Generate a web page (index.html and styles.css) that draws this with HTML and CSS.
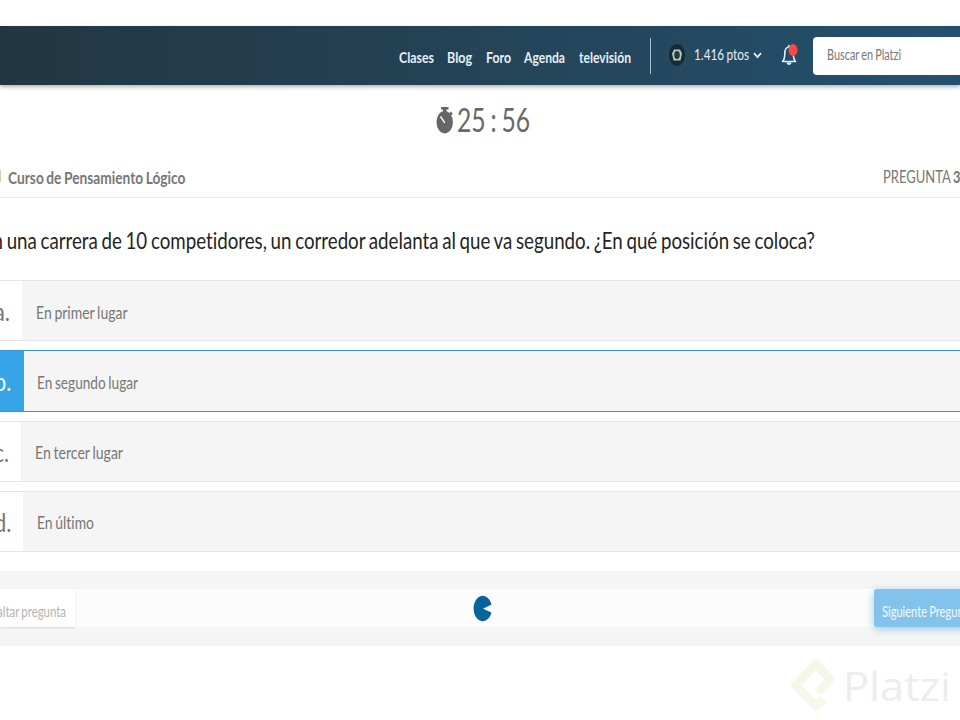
FILE: index.html
```html
<!DOCTYPE html>
<html lang="es">
<head>
<meta charset="utf-8">
<title>Curso de Pensamiento Lógico</title>
<link rel="stylesheet" href="styles.css">
</head>
<body>
<header class="navbar">
  <nav class="menu">
    <svg class="label" width="35" height="20"><text y="15" textLength="35" lengthAdjust="spacingAndGlyphs">Clases</text></svg>
    <svg class="label" width="25" height="20"><text y="15" textLength="25" lengthAdjust="spacingAndGlyphs">Blog</text></svg>
    <svg class="label" width="25" height="20"><text y="15" textLength="25" lengthAdjust="spacingAndGlyphs">Foro</text></svg>
    <svg class="label" width="41" height="20"><text y="15" textLength="41" lengthAdjust="spacingAndGlyphs">Agenda</text></svg>
    <svg class="label" width="52" height="20"><text y="15" textLength="52" lengthAdjust="spacingAndGlyphs">televisión</text></svg>
  </nav>
  <div class="profile">
    <svg class="avatar" width="16" height="22" viewBox="0 0 16 22"><ellipse cx="8" cy="11" rx="8" ry="11" fill="#162a35"/><path d="M5 5.500h6l2 4-1.500 7H4.500L3 9.500z" fill="#b9c8b8"/><ellipse cx="8" cy="11" rx="2.800" ry="4" fill="#203c43"/></svg>
    <svg class="label points" width="56" height="20"><text y="15" textLength="55" lengthAdjust="spacingAndGlyphs">1.416 ptos</text></svg>
    <svg class="chevron" width="9" height="7" viewBox="0 0 9 7"><path d="M1 1.200l3.500 4L8 1.200" fill="none" stroke="#e4eff5" stroke-width="1.800"/></svg>
  </div>
  <svg class="bell" width="17" height="24" viewBox="0 0 17 24"><path d="M1.500 18.500c2-2 2.300-4 2.300-8C3.800 6.500 5.500 4 8 4s4.300 2.500 4.300 6.500c0 4 .3 6 2.300 8zM8 4V2" fill="none" stroke="#e4f0f7" stroke-width="1.600" stroke-linejoin="round"/><path d="M5.500 19.500h5c-.3 3.300-4.700 3.300-5 0z" fill="#e4f0f7"/><ellipse cx="12" cy="7" rx="4.500" ry="6" fill="#fb4848"/></svg>
  <div class="search"><svg class="label" width="75" height="20"><text y="15" textLength="74" lengthAdjust="spacingAndGlyphs">Buscar en Platzi</text></svg></div>
</header>

<section class="timer">
  <svg width="18" height="28" viewBox="0 0 18 28"><path d="M5 1h7.500v2.500H10.500V6H7V3.500H5zM14.500 5.500l2.300 2-1.300 2-2-2z" fill="#666"/><ellipse cx="8.700" cy="16.200" rx="8.200" ry="11.200" fill="#666"/><path d="M4.500 10.500l4.300 6.300" stroke="#fff" stroke-width="1.400"/></svg>
  <svg class="label clock" width="74" height="38"><text y="26" textLength="73" lengthAdjust="spacingAndGlyphs">25 : 56</text></svg>
</section>

<section class="course">
  <span class="badge"></span>
  <svg class="label title" width="179" height="24"><text y="16.500" textLength="177.500" lengthAdjust="spacingAndGlyphs">Curso de Pensamiento Lógico</text></svg>
  <svg class="label count" width="77" height="24"><text y="15.500" textLength="77.500" lengthAdjust="spacingAndGlyphs">PREGUNTA <tspan class="strong">3</tspan></text></svg>
</section>

<h1 class="question"><svg class="label" width="833" height="32"><text y="22" textLength="833" lengthAdjust="spacingAndGlyphs">En una carrera de 10 competidores, un corredor adelanta al que va segundo. ¿En qué posición se coloca?</text></svg></h1>

<main class="options">
  <div class="option">
    <div class="key first"><svg class="label" width="16" height="30"><text y="20.500" textLength="16" lengthAdjust="spacingAndGlyphs">a.</text></svg></div>
    <svg class="label answer" width="92" height="24"><text y="18.500" textLength="91.500" lengthAdjust="spacingAndGlyphs">En primer lugar</text></svg>
  </div>
  <div class="option selected">
    <div class="key"><svg class="label" width="18" height="30"><text y="20.500" textLength="17.500" lengthAdjust="spacingAndGlyphs">b.</text></svg></div>
    <svg class="label answer" width="102" height="24"><text y="19" textLength="101" lengthAdjust="spacingAndGlyphs">En segundo lugar</text></svg>
  </div>
  <div class="option">
    <div class="key third"><svg class="label" width="15" height="30"><text y="20.500" textLength="15" lengthAdjust="spacingAndGlyphs">c.</text></svg></div>
    <svg class="label answer" width="89" height="24"><text y="19" textLength="88" lengthAdjust="spacingAndGlyphs">En tercer lugar</text></svg>
  </div>
  <div class="option">
    <div class="key fourth"><svg class="label" width="18" height="30"><text y="20.500" textLength="17.500" lengthAdjust="spacingAndGlyphs">d.</text></svg></div>
    <svg class="label answer" width="59" height="24"><text y="19" textLength="57" lengthAdjust="spacingAndGlyphs">En último</text></svg>
  </div>
</main>

<footer class="actions">
  <div class="bar">
    <div class="skip"><svg class="label" width="76" height="24"><text y="17.500" textLength="75" lengthAdjust="spacingAndGlyphs">Saltar pregunta</text></svg></div>
    <svg class="loader" width="20" height="27" viewBox="0 0 20 27"><path d="M18.500 9.500A9.200 12.700 0 1 0 18.500 17.500L10 13.700z" fill="#07659b"/></svg>
    <div class="next"><svg class="label" width="92" height="24"><text y="17.500" textLength="91" lengthAdjust="spacingAndGlyphs">Siguiente Pregunta</text></svg></div>
  </div>
</footer>

<div class="brand">
  <svg width="48" height="56" viewBox="0 0 48 56"><path d="M34 42.500L27 49L6.500 28.500L27 7L41 22L29 35.500" fill="none" stroke="#f4f8e8" stroke-width="8.500" stroke-linejoin="round"/></svg>
  <svg class="label" width="110" height="50"><text y="37" textLength="108" lengthAdjust="spacingAndGlyphs">Platzi</text></svg>
</div>
</body>
</html>
```
FILE: styles.css
```css
* { box-sizing: border-box; }
body { margin: 0; padding-top: 26px; height: 720px; overflow: hidden; background: #fff; font-family: Lato, "Liberation Sans", sans-serif; font-variant-ligatures: none; }
svg { display: block; flex: none; }
.label { overflow: visible; fill: #777; word-spacing: -0.06em; }

.navbar { display: flex; height: 59px; background: linear-gradient(90deg, #223642 0, #244052 350px, #25475d 620px, #22516f 960px); box-shadow: 0 2px 4px rgba(0,0,0,.3); }
.menu { display: flex; flex: none; gap: 13.5px; width: 651px; padding: 21.500px 0 0 398.500px; height: 59px; font-size: 15.5px; font-weight: 700; position: relative; }
.menu .label { fill: #e5eff5; }
.menu::after { content: ""; position: absolute; right: 0; top: 12px; width: 1px; height: 36px; background: #a9bdca; }
.profile { display: flex; flex: none; width: 130px; padding: 18px 0 0 18px; }
.navbar .points { margin: 1px 0 0 9px; fill: #e5eff5; font-size: 15px; }
.chevron { margin: 8px 0 0 2.500px; }
.bell { margin-top: 17px; }
.search { flex: none; margin: 11px 0 0 15px; padding: 8px 14px; width: 147px; height: 38px; border-radius: 4px 0 0 4px; background: #fff; font-size: 14.500px; }

.timer { display: flex; height: 85px; padding: 21px 0 0 436px; }
.clock { margin-left: 2.500px; fill: #686868; font-size: 32px; }

.course { display: flex; height: 28px; border-bottom: 1px solid #e9e9e9; font-size: 17px; }
.badge { flex: none; width: 1px; height: 12px; background: #cdd3b1; }
.title { margin: -3px 0 0 6.500px; font-weight: 700; }
.count { margin: -3px 0 0 696.500px; }
.strong { font-weight: 700; }

.question { margin: 0; height: 82px; padding: 28.500px 0 0; font-size: 23px; font-weight: 400; }
.question svg { margin-left: -18px; fill: #242424; }

.options { display: grid; gap: 9px; margin-bottom: 19px; }
.option { display: flex; height: 61.300px; background: #f5f5f5; border: solid #e5e5e5; border-width: 1px 0; }
.key { flex: none; width: 24px; background: #fff; padding-top: 19px; font-size: 25.500px; }
.key svg { margin-left: -6.500px; }
.first { width: 22px; }
.third { width: 21px; }
.fourth { width: 22.500px; }
.selected { border-color: #3498d4; }
.selected .key { background: #38a4e8; }
.selected .key svg { fill: #e8f5fd; }
.answer { margin: 18.500px 0 0 14.300px; font-size: 17px; }
.selected .answer { margin-left: 13.300px; }

.actions { height: 75px; padding: 18px 0; background: #f5f5f5; }
.bar { display: flex; height: 38px; background: #fcfcfc; font-size: 14.500px; }
.skip { flex: none; width: 75px; padding-top: 10px; background: #fff; box-shadow: 0 1px 2px rgba(0,0,0,.12); }
.skip svg { margin-left: -9px; fill: #b4b4b4; }
.loader { margin: 6px 0 0 397.500px; }
.next { flex: none; width: 110px; margin-left: 381px; padding: 10px 0 0 8px; border-radius: 3px 0 0 3px; background: #83c3eb; box-shadow: 0 2px 8px rgba(80,165,220,.55); }
.next svg { fill: #f2fafe; }

.brand { display: flex; margin: 11px 0 0 789px; font: 41px "Open Sans", sans-serif; }
.brand .label { margin: 7px 0 0 6px; fill: #ededed; }
```
